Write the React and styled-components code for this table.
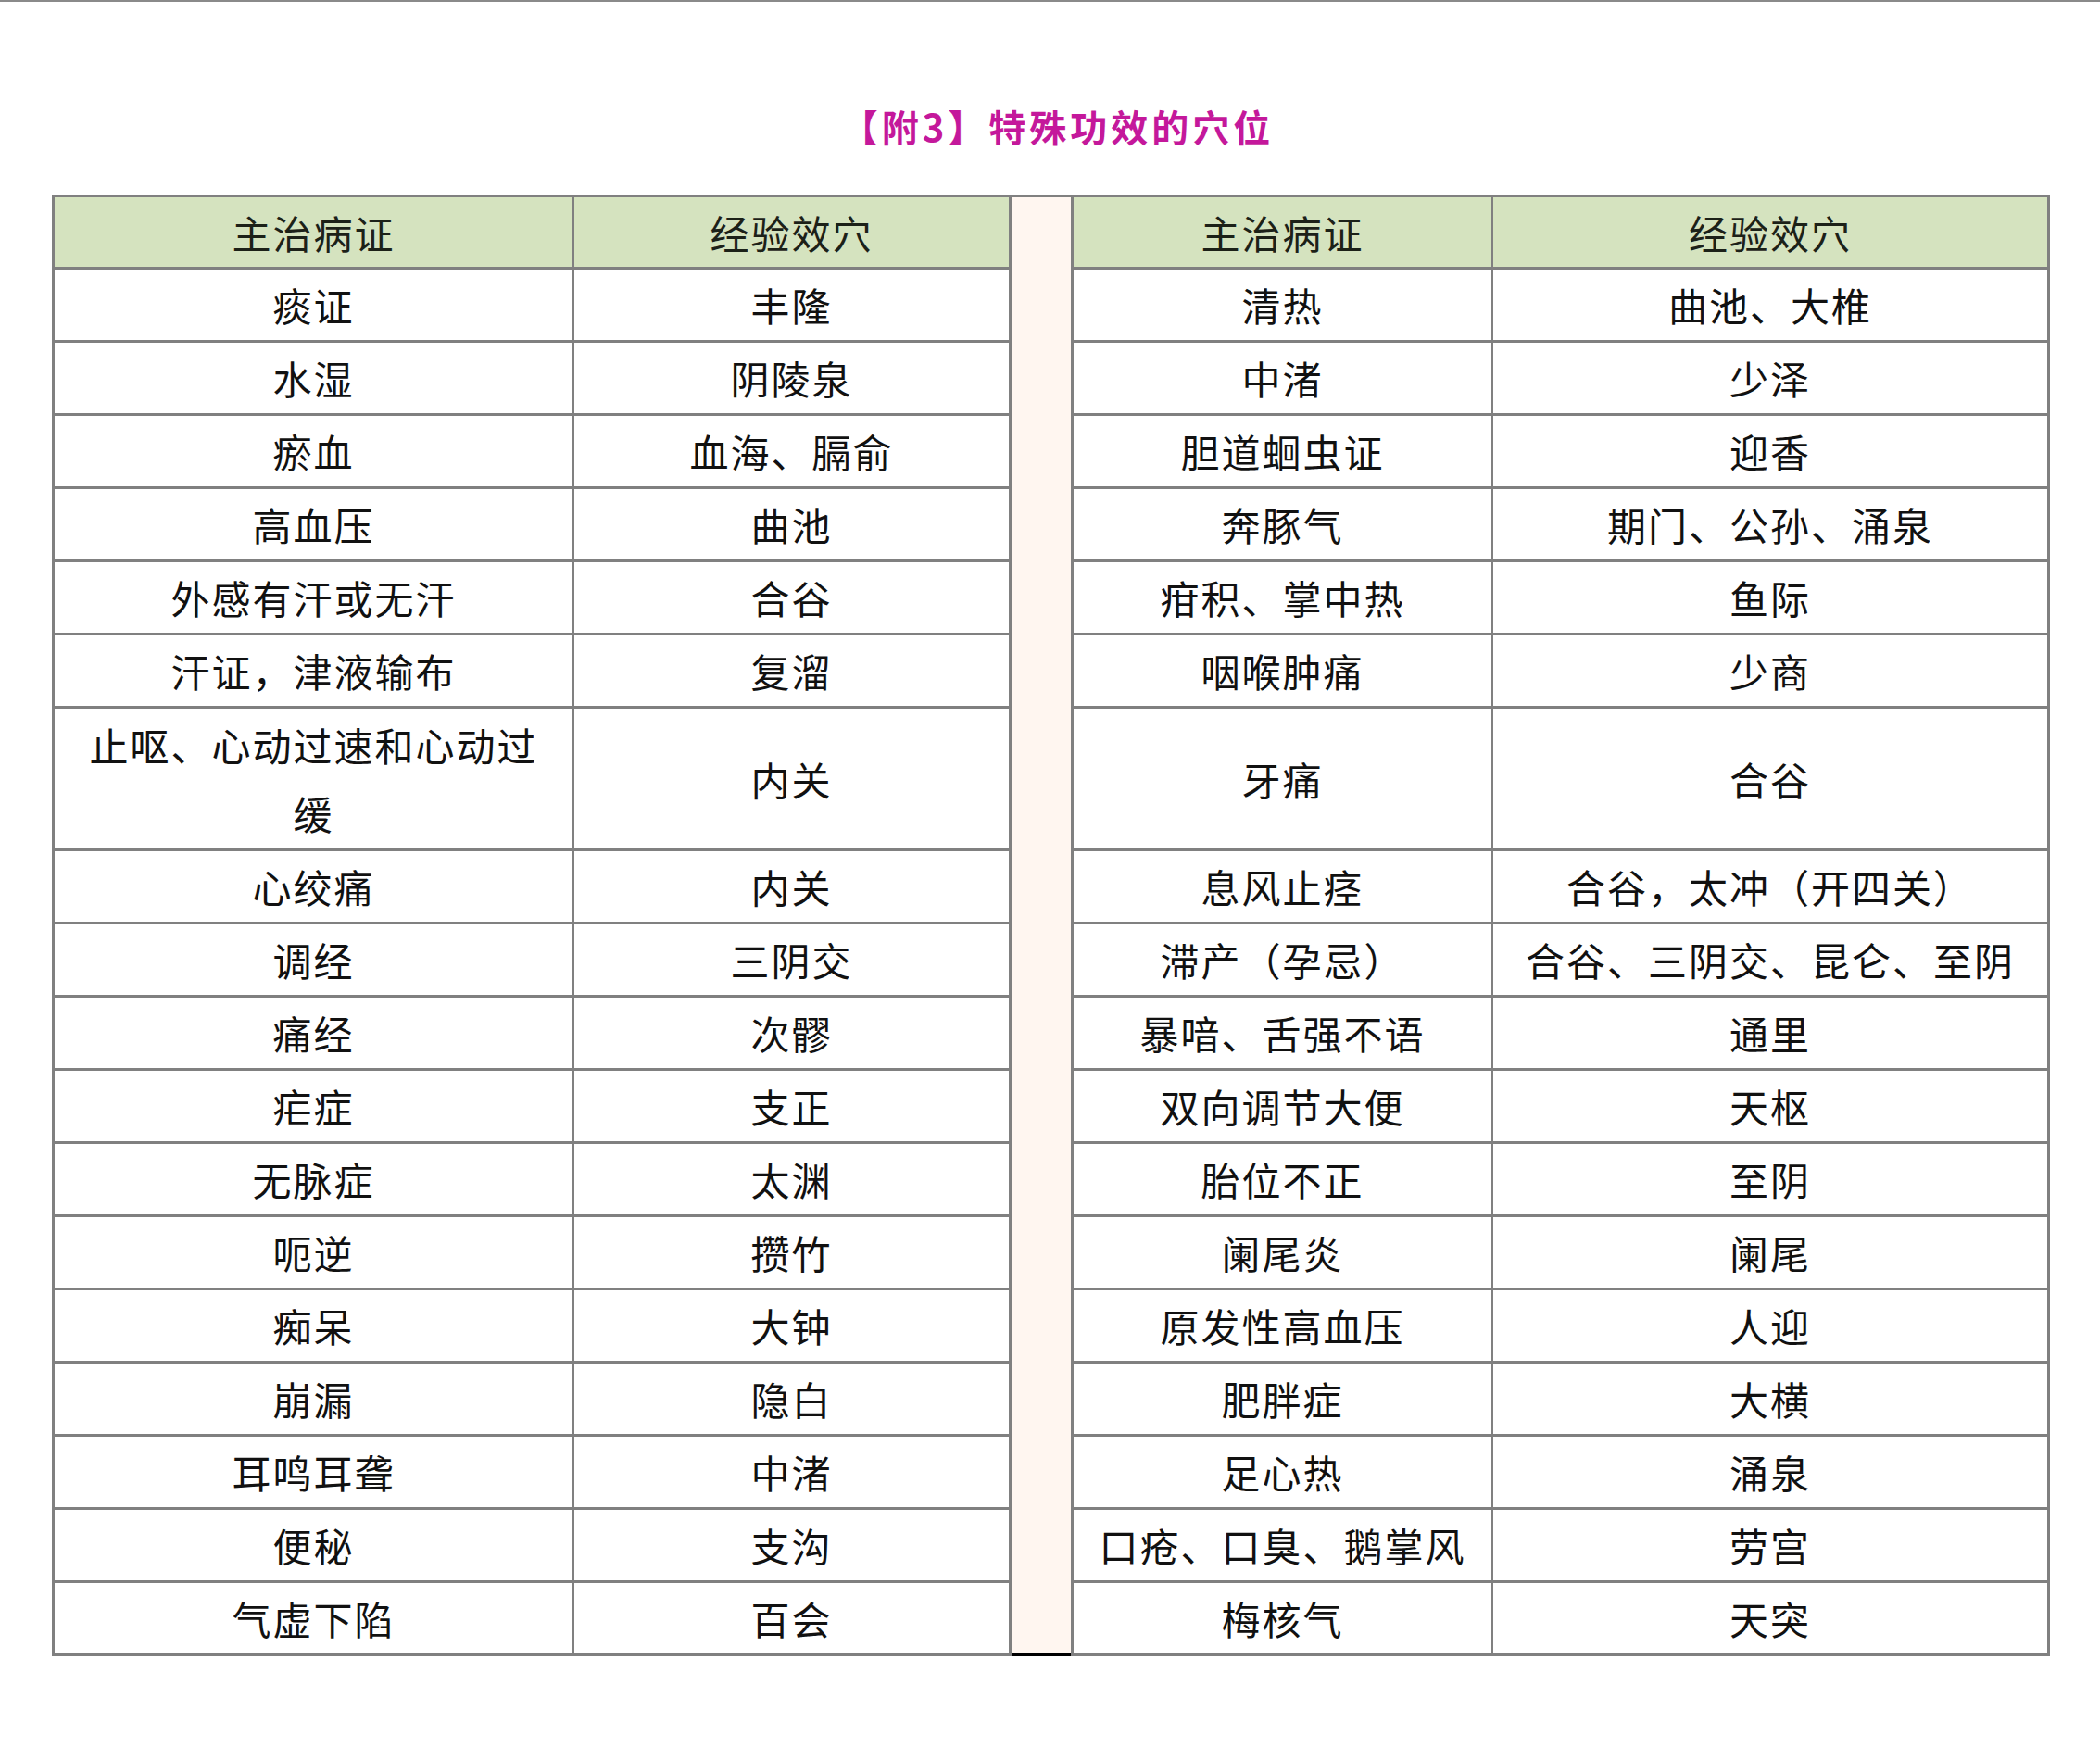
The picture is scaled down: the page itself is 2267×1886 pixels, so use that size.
import React from "react";
import styled, { createGlobalStyle } from "styled-components";

const GlobalStyle = createGlobalStyle`
  html, body {
    margin: 0;
    padding: 0;
    background: #ffffff;
  }
  body {
    border-top: 2px solid #8a8a8a;
    font-family: "Noto Sans CJK SC", "Noto Sans", sans-serif;
  }
`;

const Page = styled.div`
  padding: 104px 0 80px 56px;
  width: 2157px;
`;

const Title = styled.h1`
  margin: 0 0 44px 0;
  height: 60px;
  line-height: 60px;
  text-align: center;
  font-family: "Noto Sans CJK SC", sans-serif;
  font-size: 40px;
  font-weight: 700;
  letter-spacing: 4px;
  color: #c4189b;
  padding-left: 14px;
`;

const Frame = styled.div`
  display: flex;
  align-items: stretch;
`;

const Half = styled.div`
  display: grid;
  grid-template-columns: ${(p) => p.$cols};
  grid-template-rows: 75px repeat(6, 76px) 151px repeat(11, 76px);
  column-gap: 2px;
  row-gap: 3px;
  background: #808080;
  border: 3px solid #808080;
`;

const Spacer = styled.div`
  width: 64px;
  box-sizing: border-box;
  background: #fff6f0;
  border-top: 3px solid #808080;
  border-bottom: 3px solid #000000;
`;

const Cell = styled.div`
  display: flex;
  align-items: center;
  justify-content: center;
  text-align: center;
  padding: 0 20px;
  background: ${(p) => (p.$head ? "#d5e3bf" : "#ffffff")};
  color: ${(p) => (p.$head ? "#1c2118" : "#111111")};
  font-size: 42px;
  letter-spacing: 2px;
  line-height: 74px;
  font-family: "Noto Sans CJK SC", sans-serif;
`;

const left = [
  ["痰证", "丰隆"],
  ["水湿", "阴陵泉"],
  ["瘀血", "血海、膈俞"],
  ["高血压", "曲池"],
  ["外感有汗或无汗", "合谷"],
  ["汗证，津液输布", "复溜"],
  ["止呕、心动过速和心动过缓", "内关"],
  ["心绞痛", "内关"],
  ["调经", "三阴交"],
  ["痛经", "次髎"],
  ["疟症", "支正"],
  ["无脉症", "太渊"],
  ["呃逆", "攒竹"],
  ["痴呆", "大钟"],
  ["崩漏", "隐白"],
  ["耳鸣耳聋", "中渚"],
  ["便秘", "支沟"],
  ["气虚下陷", "百会"],
];

const right = [
  ["清热", "曲池、大椎"],
  ["中渚", "少泽"],
  ["胆道蛔虫证", "迎香"],
  ["奔豚气", "期门、公孙、涌泉"],
  ["疳积、掌中热", "鱼际"],
  ["咽喉肿痛", "少商"],
  ["牙痛", "合谷"],
  ["息风止痉", "合谷，太冲（开四关）"],
  ["滞产（孕忌）", "合谷、三阴交、昆仑、至阴"],
  ["暴喑、舌强不语", "通里"],
  ["双向调节大便", "天枢"],
  ["胎位不正", "至阴"],
  ["阑尾炎", "阑尾"],
  ["原发性高血压", "人迎"],
  ["肥胖症", "大横"],
  ["足心热", "涌泉"],
  ["口疮、口臭、鹅掌风", "劳宫"],
  ["梅核气", "天突"],
];

function HalfTable({ rows, cols }) {
  return (
    <Half $cols={cols}>
      <Cell $head>主治病证</Cell>
      <Cell $head>经验效穴</Cell>
      {rows.map(([a, b], i) => (
        <React.Fragment key={i}>
          <Cell>{a}</Cell>
          <Cell>{b}</Cell>
        </React.Fragment>
      ))}
    </Half>
  );
}

export default function App() {
  return (
    <>
      <GlobalStyle />
      <Page>
        <Title>【附3】特殊功效的穴位</Title>
        <Frame>
          <HalfTable rows={left} cols="559px 469px" />
          <Spacer />
          <HalfTable rows={right} cols="451px 598px" />
        </Frame>
      </Page>
    </>
  );
}
